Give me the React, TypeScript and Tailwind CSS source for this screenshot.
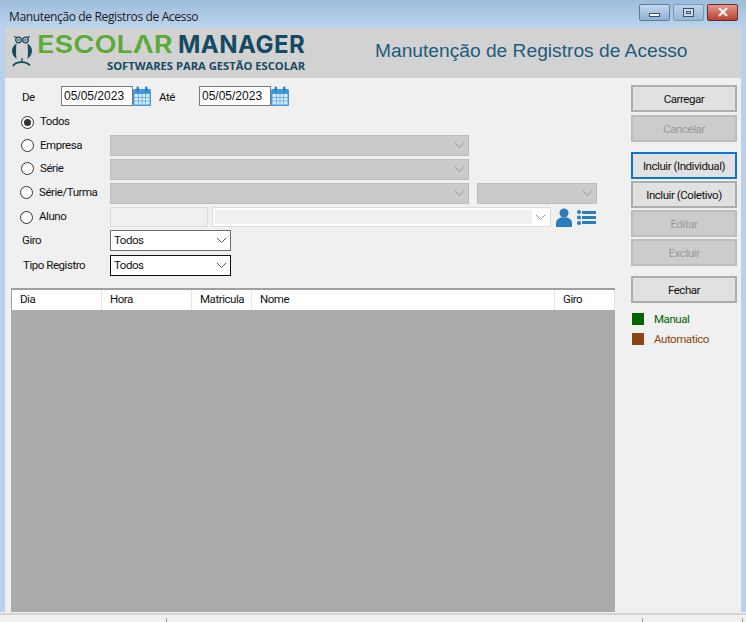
import type { ReactNode } from "react";

const ui = "font-['Roboto',sans-serif] text-[11.5px] tracking-[-0.45px] text-[#111]";

function Chevron({ color = "#9a9a9a" }: { color?: string }) {
  return (
    <svg width="11" height="7" viewBox="0 0 11 7" fill="none">
      <path d="M1 1l4.5 4.5L10 1" stroke={color} strokeWidth="1" />
    </svg>
  );
}

function CalendarIcon() {
  return (
    <svg width="18" height="20" viewBox="0 0 18 20" className="shrink-0">
      <rect x="0" y="3" width="18" height="17" rx="1.5" fill="#3f9ae0" />
      <rect x="1.500" y="8" width="15" height="10.500" fill="#dcebf7" />
      <path d="M1.500 11.500h15M1.500 15h15M5.500 8v10.500M9 8v10.500M12.500 8v10.500" stroke="#6fb4e6" strokeWidth="1" />
      <rect x="3.500" y="0.500" width="2.500" height="5.500" rx="1.200" fill="#2e80c0" />
      <rect x="12" y="0.500" width="2.500" height="5.500" rx="1.200" fill="#2e80c0" />
    </svg>
  );
}

function DateBox() {
  return (
    <div className="flex h-[20px] w-[72px] items-center border border-[#7a7a7a] bg-white pl-[2px] font-['Liberation_Sans',sans-serif] text-[12px] text-[#111]">
      05/05/2023
    </div>
  );
}

function Radio({ checked = false, label, x = 0, gap = 6 }: { checked?: boolean; label: string; x?: number; gap?: number }) {
  return (
    <div className="flex items-center" style={{ marginLeft: x }}>
      <span className="flex h-[13px] w-[13px] items-center justify-center rounded-full border border-[#333] bg-white">
        {checked && <span className="h-[7px] w-[7px] rounded-full bg-[#333]" />}
      </span>
      <span className={ui} style={{ marginLeft: gap }}>{label}</span>
    </div>
  );
}

function Combo({ w, text, dark }: { w: string; text?: string; dark?: boolean }) {
  if (text) {
    return (
      <div className={`flex h-[21px] ${w} items-center justify-between border bg-white pl-[3px] pr-[3px] ${dark ? "border-[#111]" : "border-[#6e6e6e]"} ${ui}`}>
        {text}
        <Chevron color="#555" />
      </div>
    );
  }
  return (
    <div className={`flex h-[21px] ${w} items-center justify-end border border-[#bdbdbd] bg-[#cacaca] pr-[3px]`}>
      <Chevron />
    </div>
  );
}

function Btn({ children, disabled, focus, mt }: { children: ReactNode; disabled?: boolean; focus?: boolean; mt: string }) {
  const tone = focus
    ? "border-2 border-[#0a78d2] bg-[#e1e1e1] text-[#111]"
    : disabled
      ? "border-2 border-[#bcbcbc] bg-[#cccccc] text-[#9a9a9a]"
      : "border-2 border-[#adadad] bg-[#e1e1e1] text-[#111]";
  return (
    <div className={`flex h-[27px] w-[106px] items-center justify-center pt-[2px] ${mt} ${tone} font-['Roboto',sans-serif] text-[11.5px] tracking-[-0.45px]`}>
      {children}
    </div>
  );
}

function Label({ children, x, w }: { children: ReactNode; x: string; w: string }) {
  return <span className={`${x} ${w} shrink-0 ${ui}`}>{children}</span>;
}

function Cell({ w, children }: { w: string; children: string }) {
  return (
    <div className={`flex h-full ${w} shrink-0 items-center border-r border-[#e4e4e4] pl-[8px] ${ui}`}>{children}</div>
  );
}

function Owl() {
  return (
    <svg width="22" height="32" viewBox="0 0 22 32" className="mb-[4px] shrink-0">
      <circle cx="7.500" cy="5" r="2.800" fill="none" stroke="#164a63" strokeWidth="1.300" />
      <circle cx="14.500" cy="5" r="2.800" fill="none" stroke="#164a63" strokeWidth="1.300" />
      <circle cx="7.500" cy="5" r="1" fill="#164a63" />
      <circle cx="14.500" cy="5" r="1" fill="#164a63" />
      <path d="M3 1.500l3 1M19 1.500l-3 1" stroke="#164a63" strokeWidth="1.200" />
      <path d="M5.500 8.500C2.500 10 1 13 1 16c0 3 2 6 4.500 8-.6-5-.6-10 0-15.500z" fill="#164a63" />
      <path d="M16.500 8.500c3 1.500 4.500 4.500 4.500 7.500 0 3-2 6-4.500 8 .6-5 .6-10 0-15.500z" fill="#164a63" />
      <path d="M2 31c2.500-4 12-6 17-.5" fill="none" stroke="#164a63" strokeWidth="1.800" />
      <path d="M11 23v4" stroke="#164a63" strokeWidth="1.200" />
    </svg>
  );
}

export default function App() {
  return (
    <div className="flex h-[622px] w-[746px] flex-col overflow-hidden bg-[#b9d1ea]">
      {/* title bar */}
      <div className="flex h-[28px] shrink-0 items-center justify-between bg-gradient-to-b from-[#9dbcdb] to-[#bcd4ec] pl-[9px] pr-[8px]">
        <span className="mt-[6px] font-['Open_Sans',sans-serif] text-[12px] tracking-[-0.36px] text-[#1a1a1a]">Manutenção de Registros de Acesso</span>
        <div className="mb-[4px] flex gap-[3px]">
          <div className="flex h-[17px] w-[31px] items-end justify-center rounded-[2px] border border-[#5d7a99] bg-gradient-to-b from-[#c5d9ed] to-[#8fb0d2] pb-[3px]">
            <div className="h-[4px] w-[11px] border border-[#3d4f63] bg-white" />
          </div>
          <div className="flex h-[17px] w-[31px] items-center justify-center rounded-[2px] border border-[#7b98b6] bg-gradient-to-b from-[#bcd3ea] to-[#96b6d6]">
            <div className="flex h-[9px] w-[11px] items-center justify-center border border-[#3d4f63] bg-[#c9dbec]">
              <div className="h-[3px] w-[5px] border border-[#3d4f63]" />
            </div>
          </div>
          <div className="flex h-[17px] w-[31px] items-center justify-center rounded-[2px] border border-[#6e2a22] bg-gradient-to-b from-[#e2988c] to-[#b93f2e]">
            <svg width="12" height="10" viewBox="0 0 12 10">
              <path d="M2 1l8 8M10 1l-8 8" stroke="#f2f2f2" strokeWidth="2.400" />
            </svg>
          </div>
        </div>
      </div>

      {/* form body */}
      <div className="mx-[5px] flex h-[584px] w-[736px] shrink-0 flex-col bg-[#f0f0f0]">
        <div className="flex h-[50px] shrink-0 items-center bg-[#d2d2d2]">
          <div className="ml-[6px] flex w-[364px] shrink-0 items-center">
            <Owl />
            <div className="ml-[4px] flex flex-col">
              <div className="-mt-[1px] flex h-[24px] items-center font-['Inter',sans-serif] text-[24px] leading-none">
                <span className="w-[141px] shrink-0">
                  <span className="inline-block origin-left scale-x-[1.2] font-semibold text-[#5aaa36]">
                    ESCOL
                    <span className="relative">
                      A
                      {/* logo's A has no crossbar */}
                      <span className="absolute left-1/2 top-[15px] h-[4px] w-[5px] -translate-x-1/2 bg-[#d2d2d2]" />
                    </span>
                    R
                  </span>
                </span>
                <span className="font-bold tracking-[0.5px] text-[#154a63]">MANAGER</span>
              </div>
              <div className="mt-[2px] pl-[70px] font-['Open_Sans',sans-serif] text-[11.2px] leading-[14px] font-bold whitespace-nowrap text-[#154a63]">
                SOFTWARES PARA GESTÃO ESCOLAR
              </div>
            </div>
          </div>
          <span className="mb-[3px] font-['Liberation_Sans',sans-serif] text-[19.2px] text-[#1f5c7c]">Manutenção de Registros de Acesso</span>
        </div>

        <div className="flex min-h-0 flex-1">
          {/* left */}
          <div className="flex w-[610px] shrink-0 flex-col">
            <div className="mt-[8px] flex h-[20px] items-center">
              <Label x="ml-[17px] mt-[4px]" w="w-[39px]">De</Label>
              <DateBox />
              <CalendarIcon />
              <Label x="ml-[8px] mt-[4px]" w="w-[21px]">Até</Label>
              <div className="ml-[19px]"><DateBox /></div>
              <CalendarIcon />
            </div>
            <div className="mt-[8px] flex h-[16px] items-center">
              <Radio checked label="Todos" x={16} />
            </div>
            <div className="mt-[5px] flex items-center">
              <div className="w-[105px]"><Radio label="Empresa" x={16} /></div>
              <Combo w="w-[359px]" />
            </div>
            <div className="mt-[3px] flex items-center">
              <div className="-mt-[2px] w-[105px]"><Radio label="Série" x={16} /></div>
              <Combo w="w-[359px]" />
            </div>
            <div className="mt-[3px] flex items-center">
              <div className="-mt-[2px] w-[105px]"><Radio label="Série/Turma" x={15} /></div>
              <Combo w="w-[359px]" />
              <div className="ml-[8px]"><Combo w="w-[120px]" /></div>
            </div>
            <div className="mt-[3px] flex h-[20px] items-center">
              <div className="w-[105px]"><Radio label="Aluno" x={15} /></div>
              <div className="h-[20px] w-[98px] border border-[#dcdcdc] bg-[#f0f0f0]" />
              <div className="ml-[4px] flex h-[20px] w-[339px] items-center justify-between border border-[#dcdcdc] bg-white p-[2px] pr-[4px]">
                <div className="h-full w-[317px] bg-[#f0f0f0]" />
                <Chevron />
              </div>
              <svg className="ml-[5px]" width="16" height="19" viewBox="0 0 16 19">
                <circle cx="8" cy="5" r="4.500" fill="#2a7dbb" />
                <path d="M0 19v-4c0-3 3-5 5-5.500h6c2 .5 5 2.500 5 5.500v4z" fill="#2a7dbb" />
              </svg>
              <svg className="ml-[5px]" width="19" height="15" viewBox="0 0 19 15">
                <circle cx="2" cy="2" r="2" fill="#2a7dbb" />
                <circle cx="2" cy="7.500" r="2" fill="#2a7dbb" />
                <circle cx="2" cy="13" r="2" fill="#2a7dbb" />
                <rect x="5" y="1" width="14" height="3" fill="#2a7dbb" />
                <rect x="5" y="6" width="14" height="3" fill="#2a7dbb" />
                <rect x="5" y="11" width="14" height="3" fill="#2a7dbb" />
              </svg>
            </div>
            <div className="mt-[3px] flex items-center">
              <Label x="ml-[17px]" w="w-[88px]">Giro</Label>
              <Combo w="w-[121px]" text="Todos" />
            </div>
            <div className="mt-[4px] flex items-center">
              <Label x="ml-[18px]" w="w-[87px]">Tipo Registro</Label>
              <Combo w="w-[121px]" text="Todos" dark />
            </div>

            {/* grid */}
            <div className="ml-[6px] mt-[12px] flex w-[604px] flex-1 flex-col border-t-2 border-[#a0a0a0] bg-[#ababab]">
              <div className="flex h-[20px] shrink-0 border-l border-[#a0a0a0] bg-white">
                <Cell w="w-[90px]">Dia</Cell>
                <Cell w="w-[90px]">Hora</Cell>
                <Cell w="w-[60px]">Matricula</Cell>
                <Cell w="w-[303px]">Nome</Cell>
                <Cell w="w-[60px]">Giro</Cell>
              </div>
            </div>
          </div>

          {/* right */}
          <div className="ml-[16px] flex flex-col">
            <Btn mt="mt-[7px]">Carregar</Btn>
            <Btn mt="mt-[3px]" disabled>Cancelar</Btn>
            <Btn mt="mt-[10px]" focus>Incluir (Individual)</Btn>
            <Btn mt="mt-[2px]">Incluir (Coletivo)</Btn>
            <Btn mt="mt-[2px]" disabled>Editar</Btn>
            <Btn mt="mt-[2px]" disabled>Excluir</Btn>
            <Btn mt="mt-[10px]">Fechar</Btn>
            <div className="mt-[10px] flex h-[12px] items-center">
              <span className="ml-[1px] h-[12px] w-[12px] bg-[#006400]" />
              <span className={`${ui} ml-[10px] mt-[2px] !text-[#006400]`}>Manual</span>
            </div>
            <div className="mt-[8px] flex h-[12px] items-center">
              <span className="ml-[1px] h-[12px] w-[12px] bg-[#8b4513]" />
              <span className={`${ui} ml-[10px] mt-[2px] !text-[#8b4513]`}>Automatico</span>
            </div>
          </div>
        </div>
      </div>

      {/* status strip */}
      <div className="flex h-[10px] shrink-0 flex-col bg-[#f0f0f0]">
        <div className="mt-[1px] h-[2px] bg-[#d4d4d4]" />
        <div className="mt-[3px] flex h-[5px]">
          <div className="ml-[166px] h-full w-px bg-[#9a9a9a]" />
          <div className="ml-[475px] h-full w-px bg-[#9a9a9a]" />
          <div className="ml-[99px] h-full w-px bg-[#9a9a9a]" />
        </div>
      </div>
    </div>
  );
}
